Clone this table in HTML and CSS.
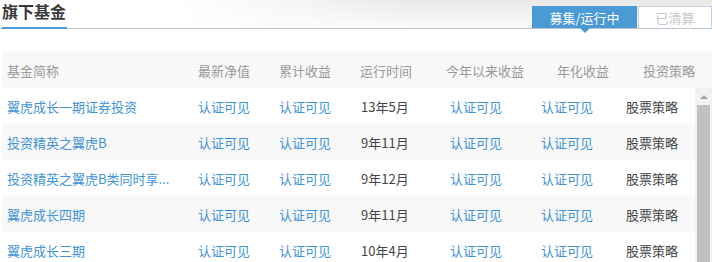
FILE: index.html
```html
<!DOCTYPE html>
<html lang="zh-CN">
<head>
<meta charset="utf-8">
<title>旗下基金</title>
<link rel="stylesheet" href="styles.css">
</head>
<body>
<div class="panel">
  <div class="topbar">
    <h2 class="title">旗下基金</h2>
    <div class="tabs">
      <span class="tab active">募集/运行中</span>
      <span class="tab">已清算</span>
    </div>
  </div>
  <div class="table">
    <div class="row head">
      <span class="c1">基金简称</span>
      <span class="c2">最新净值</span>
      <span class="c3">累计收益</span>
      <span class="c4 h4">运行时间</span>
      <span class="c5 h5">今年以来收益</span>
      <span class="c6 h6">年化收益</span>
      <span class="c7 h7">投资策略</span>
    </div>
    <div class="body">
      <div class="rows">
        <div class="row">
          <span class="c1 link">翼虎成长一期证券投资</span>
          <span class="c2 link">认证可见</span>
          <span class="c3 link">认证可见</span>
          <span class="c4">13年5月</span>
          <span class="c5 link">认证可见</span>
          <span class="c6 link">认证可见</span>
          <span class="c7">股票策略</span>
        </div>
        <div class="row alt">
          <span class="c1 link">投资精英之翼虎B</span>
          <span class="c2 link">认证可见</span>
          <span class="c3 link">认证可见</span>
          <span class="c4">9年11月</span>
          <span class="c5 link">认证可见</span>
          <span class="c6 link">认证可见</span>
          <span class="c7">股票策略</span>
        </div>
        <div class="row">
          <span class="c1 link">投资精英之翼虎B类同时享...</span>
          <span class="c2 link">认证可见</span>
          <span class="c3 link">认证可见</span>
          <span class="c4">9年12月</span>
          <span class="c5 link">认证可见</span>
          <span class="c6 link">认证可见</span>
          <span class="c7">股票策略</span>
        </div>
        <div class="row alt">
          <span class="c1 link">翼虎成长四期</span>
          <span class="c2 link">认证可见</span>
          <span class="c3 link">认证可见</span>
          <span class="c4">9年11月</span>
          <span class="c5 link">认证可见</span>
          <span class="c6 link">认证可见</span>
          <span class="c7">股票策略</span>
        </div>
        <div class="row">
          <span class="c1 link">翼虎成长三期</span>
          <span class="c2 link">认证可见</span>
          <span class="c3 link">认证可见</span>
          <span class="c4">10年4月</span>
          <span class="c5 link">认证可见</span>
          <span class="c6 link">认证可见</span>
          <span class="c7">股票策略</span>
        </div>
      </div>
      <div class="scrollbar">
        <span class="arrow"></span>
        <span class="thumb"></span>
      </div>
    </div>
  </div>
</div>
</body>
</html>
```
FILE: styles.css
```css
* { box-sizing: border-box; }
html, body { margin: 0; padding: 0; background: #fff; }
body {
  width: 712px;
  height: 262px;
  overflow: hidden;
  font-family: "Noto Sans CJK SC", "Noto Sans", sans-serif;
  font-size: 13px;
}
.panel { width: 712px; }
.topbar {
  height: 29px;
  display: flex;
  justify-content: space-between;
  align-items: flex-end;
  border-bottom: 1px solid #b9c5d3;
  background:
    linear-gradient(to right, #fff 25%, rgba(255,255,255,0) 60%),
    linear-gradient(to bottom, #e8e8e8, #fafafa);
  padding-left: 2px;
}
.title {
  margin: 0;
  align-self: stretch;
  font-size: 16px;
  font-weight: bold;
  color: #3a3a3a;
  line-height: 22px;
  width: 65px;
  border-bottom: 2px solid #4a9ad6;
  margin-bottom: -1px;
}
.tabs { display: flex; height: 22px; margin-bottom: 0; }
.tab {
  position: relative;
  display: flex;
  align-items: center;
  justify-content: center;
  height: 22px;
  width: 74px;
  border: 1px solid #c9d1dc;
  border-bottom: none;
  color: #c4c7cc;
  background: #fff;
  font-size: 13px;
}
.tab.active {
  width: 105px;
  background: #4a9ad6;
  border-color: #4a9ad6;
  color: #fff;
  margin-right: 1px;
}
.tab.active::after {
  content: "";
  position: absolute;
  left: 47px;
  bottom: -5px;
  border-left: 5px solid transparent;
  border-right: 5px solid transparent;
  border-top: 5px solid #4a9ad6;
}
.table { margin-top: 23px; padding-left: 2px; }
.row {
  display: grid;
  grid-template-columns: 196px 81px 82px 89px 91px 85px 69px;
  height: 36px;
  align-items: center;
  white-space: nowrap;
}
.row.head { background: #f8f8f8; color: #999; }
.row.alt { background: #f8f8f8; }
.c1 { padding-left: 5px; }
.h4 { margin-left: -1px; }
.h5 { margin-left: -4px; }
.h6 { margin-left: 16px; }
.h7 { margin-left: 17px; }
.row span { color: #444; }
.row.head span { color: #999; }
.row span.link { color: #3f93d8; }
.body { display: flex; }
.rows { width: 693px; }
.scrollbar {
  width: 17px;
  background: #f1f1f1;
  display: flex;
  flex-direction: column;
  align-items: center;
}
.arrow {
  margin-top: 7px;
  border-left: 4px solid transparent;
  border-right: 4px solid transparent;
  border-bottom: 4px solid #a3a3a3;
}
.thumb {
  margin-top: 6px;
  width: 13px;
  flex: 1;
  background: #c1c1c1;
}
```
